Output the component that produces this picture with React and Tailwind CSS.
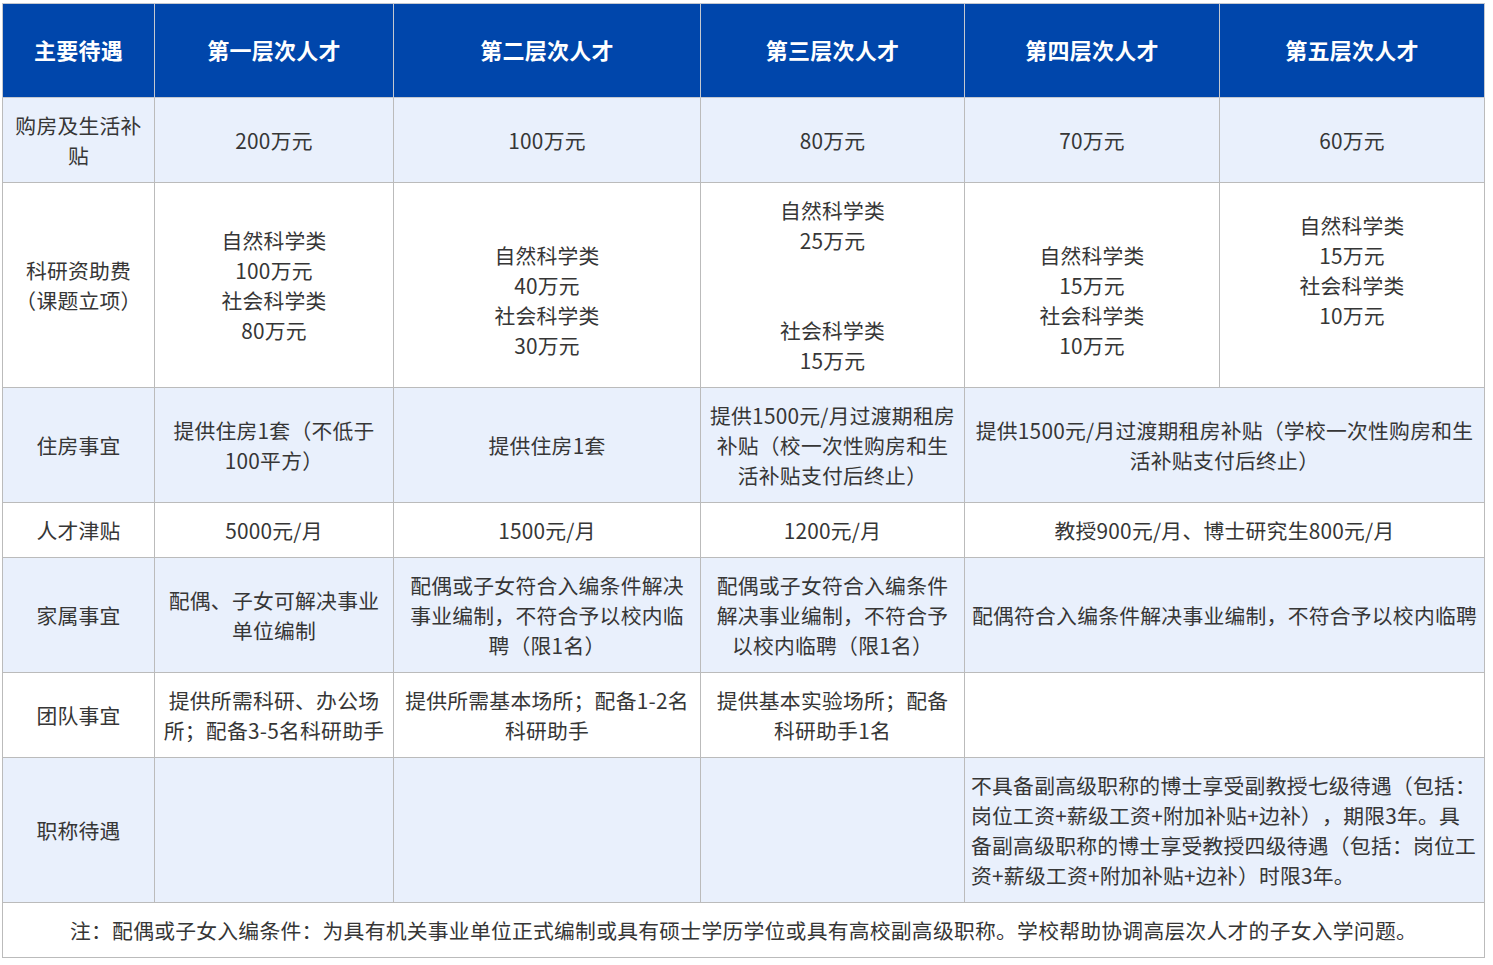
const HEAD = ["主要待遇", "第一层次人才", "第二层次人才", "第三层次人才", "第四层次人才", "第五层次人才"];
const WIDTHS = [152, 239, 307, 264, 255, 265];

const ROWS = [
  {
    label: ["购房及生活补", "贴"],
    cells: [["200万元"], ["100万元"], ["80万元"], ["70万元"], ["60万元"]],
  },
  {
    label: ["科研资助费", "（课题立项）"],
    cells: [
      ["自然科学类", "100万元", "社会科学类", "80万元"],
      ["", "自然科学类", "40万元", "社会科学类", "30万元"],
      ["自然科学类", "25万元", "", "", "社会科学类", "15万元"],
      ["", "自然科学类", "15万元", "社会科学类", "10万元"],
      ["自然科学类", "15万元", "社会科学类", "10万元", ""],
    ],
  },
  {
    label: ["住房事宜"],
    cells: [
      ["提供住房1套（不低于", "100平方）"],
      ["提供住房1套"],
      ["提供1500元/月过渡期租房", "补贴（校一次性购房和生", "活补贴支付后终止）"],
      { span: 2, lines: ["提供1500元/月过渡期租房补贴（学校一次性购房和生", "活补贴支付后终止）"] },
    ],
  },
  {
    label: ["人才津贴"],
    cells: [["5000元/月"], ["1500元/月"], ["1200元/月"], { span: 2, lines: ["教授900元/月、博士研究生800元/月"] }],
  },
  {
    label: ["家属事宜"],
    cells: [
      ["配偶、子女可解决事业", "单位编制"],
      ["配偶或子女符合入编条件解决", "事业编制，不符合予以校内临", "聘（限1名）"],
      ["配偶或子女符合入编条件", "解决事业编制，不符合予", "以校内临聘（限1名）"],
      { span: 2, lines: ["配偶符合入编条件解决事业编制，不符合予以校内临聘"] },
    ],
  },
  {
    label: ["团队事宜"],
    cells: [
      ["提供所需科研、办公场", "所；配备3-5名科研助手"],
      ["提供所需基本场所；配备1-2名", "科研助手"],
      ["提供基本实验场所；配备", "科研助手1名"],
      { span: 2, lines: [] },
    ],
  },
  {
    label: ["职称待遇"],
    cells: [
      [],
      [],
      [],
      {
        span: 2,
        left: true,
        lines: [
          "不具备副高级职称的博士享受副教授七级待遇（包括：",
          "岗位工资+薪级工资+附加补贴+边补），期限3年。具",
          "备副高级职称的博士享受教授四级待遇（包括：岗位工",
          "资+薪级工资+附加补贴+边补）时限3年。",
        ],
      },
    ],
  },
];

function Lines({ lines }) {
  return lines.map((l, i) => (
    <div key={i} className="whitespace-nowrap h-[30px]">
      {l}
    </div>
  ));
}

export default function App() {
  return (
    <div
      className="bg-white min-h-[965px] pt-[3px] pl-[2px] text-[#363636] [text-spacing-trim:space-all]"
      style={{ fontFamily: '"Noto Sans CJK SC", "Noto Sans", sans-serif' }}
    >
      <table className="table-fixed border-collapse w-[1483px] text-[20.8px] leading-[30px] tracking-[0.25px]">
        <colgroup>
          {WIDTHS.map((w, i) => (
            <col key={i} style={{ width: w }} />
          ))}
        </colgroup>
        <thead>
          <tr className="bg-[#0046ab]">
            {HEAD.map((h) => (
              <th
                key={h}
                className="h-[94px] pb-[4px] border border-[#c4c8d0] text-white text-[22px] font-bold text-center align-middle"
              >
                {h}
              </th>
            ))}
          </tr>
        </thead>
        <tbody>
          {ROWS.map((r, ri) => (
            <tr key={ri} className={ri % 2 === 0 ? "bg-[#e9f0fc]" : "bg-white"}>
              <td className="border border-[#bbbbbb] px-[6px] py-3 text-center align-middle">
                <Lines lines={r.label} />
              </td>
              {r.cells.map((c, ci) => {
                const cell = Array.isArray(c) ? { span: 1, lines: c } : c;
                return (
                  <td
                    key={ci}
                    colSpan={cell.span}
                    className={
                      "border border-[#bbbbbb] px-[6px] py-3 align-middle " +
                      (cell.left ? "text-left" : "text-center")
                    }
                  >
                    <Lines lines={cell.lines} />
                  </td>
                );
              })}
            </tr>
          ))}
          <tr className="bg-white">
            <td colSpan={6} className="border border-[#bbbbbb] px-[6px] py-3 text-center">
              注：配偶或子女入编条件：为具有机关事业单位正式编制或具有硕士学历学位或具有高校副高级职称。学校帮助协调高层次人才的子女入学问题。
            </td>
          </tr>
        </tbody>
      </table>
    </div>
  );
}
